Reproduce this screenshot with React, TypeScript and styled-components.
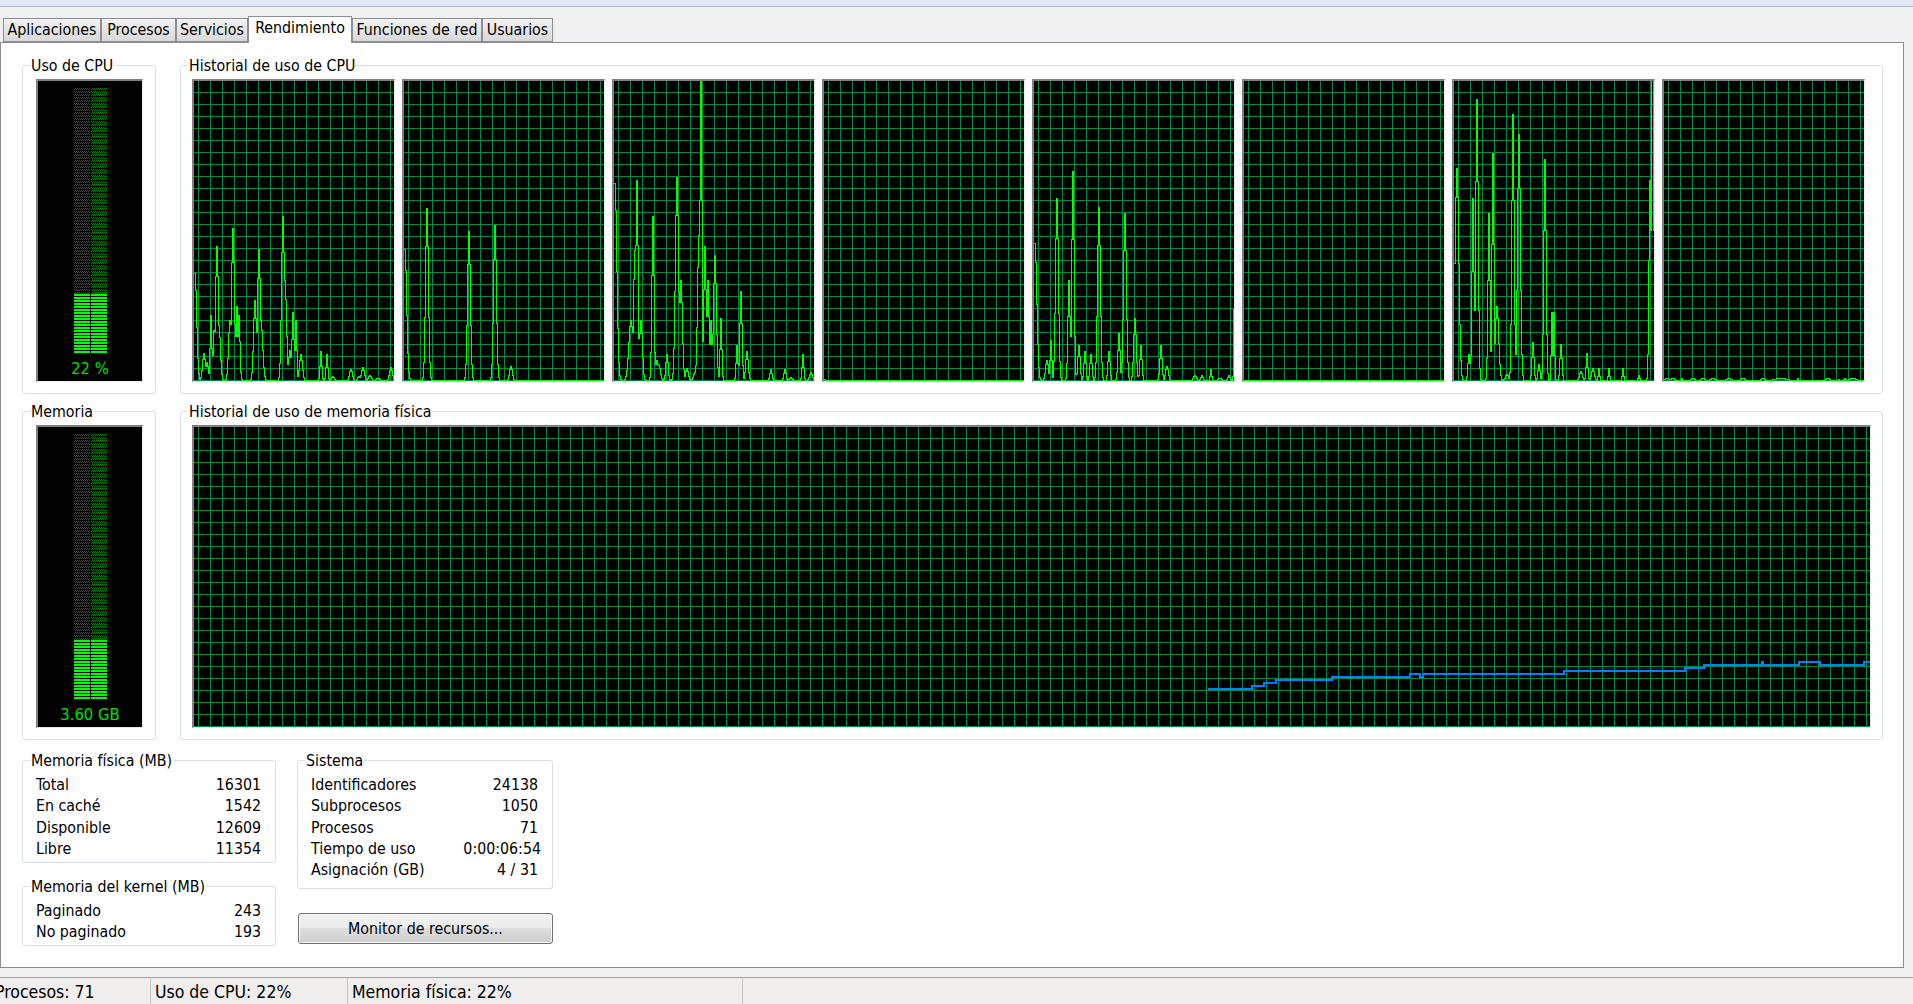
import React from "react";
import styled, { createGlobalStyle } from "styled-components";

const Global = createGlobalStyle`
  html, body { margin: 0; padding: 0; background: #f0f0f0; }
  body { width: 1913px; height: 1004px; overflow: hidden; }
  * { box-sizing: border-box; }
`;

const Window = styled.div`
  width: 1913px;
  height: 1004px;
  display: flex;
  flex-direction: column;
  overflow: hidden;
  background: #f0f0f0;
  color: #000;
  font-family: "DejaVu Sans Condensed", "DejaVu Sans", sans-serif;
  font-stretch: condensed;
  font-size: 15.8px;
`;
const TopStrip = styled.div`
  height: 7px;
  flex: none;
  background: #e4e8f5;
  border-bottom: 1px solid #b4b8cc;
`;
const TabBar = styled.div`
  display: flex;
  align-items: flex-end;
  height: 35px;
  flex: none;
  padding-left: 3px;
  position: relative;
  z-index: 1;
`;
const Tab = styled.div<{ $w: number; $active?: boolean }>`
  width: ${(p) => p.$w}px;
  height: ${(p) => (p.$active ? 27 : 24)}px;
  margin-bottom: ${(p) => (p.$active ? -1 : 0)}px;
  padding-top: 1px;
  text-align: center;
  line-height: 20px;
  border: 1px solid #8c8e94;
  border-bottom: ${(p) => (p.$active ? "none" : "1px solid #8c8e94")};
  background: ${(p) => (p.$active ? "#fff" : "linear-gradient(#f2f2f2, #d9d9d9)")};
  white-space: nowrap;
`;
const Panel = styled.div`
  height: 926px;
  width: 1904px;
  flex: none;
  background: #fff;
  border: 1px solid #898c95;
  padding: 22px 20px 0 21px;
  display: flex;
  flex-direction: column;
`;
const Row = styled.div<{ $mb: number }>`
  display: flex;
  gap: 24px;
  margin-bottom: ${(p) => p.$mb}px;
`;
const Group = styled.div<{ $w: number; $h: number; $mb?: number }>`
  position: relative;
  width: ${(p) => p.$w}px;
  height: ${(p) => p.$h}px;
  margin-bottom: ${(p) => p.$mb || 0}px;
  border: 1px solid #d9e0e8;
  border-radius: 3px;
`;
const MeterGroup = styled(Group)`
  padding: 13px 12px 0 13px;
`;
const HistoryGroup = styled(Group)`
  padding: 13px 0 0 11px;
  display: flex;
  gap: 7px;
`;
const Legend = styled.div`
  position: absolute;
  left: 7px;
  top: -10px;
  padding: 0 1px;
  line-height: 20px;
  background: #fff;
  white-space: nowrap;
`;
const Meter = styled.div`
  position: relative;
  width: 107px;
  height: 303px;
  background: #000;
  border-top: 2px solid #808080;
  border-left: 2px solid #808080;
  border-right: 1px solid #e8ecf0;
  border-bottom: 1px solid #e8ecf0;
  display: flex;
  flex-direction: column;
  align-items: center;
  padding-top: 7px;
`;
const Bars = styled.div`
  display: flex;
  gap: 1px;
`;
const BarColumn = styled.div`
  width: 16px;
  height: 265px;
  display: flex;
  flex-direction: column;
`;
const BarDim = styled.div`
  flex: 1;
  background-image: repeating-conic-gradient(#008000 0 25%, #000 0 50%);
  background-size: 2px 2px;
  -webkit-mask-image: repeating-linear-gradient(to bottom, #000 0 2px, transparent 2px 3px);
  mask-image: repeating-linear-gradient(to bottom, #000 0 2px, transparent 2px 3px);
`;
const BarLit = styled.div`
  height: 59px;
  background: repeating-linear-gradient(to bottom, #00ff00 0 2px, #000 2px 3px);
`;
const MeterText = styled.div`
  margin-top: 6px;
  color: #00e000;
  font-size: 16.5px;
  line-height: 20px;
  text-align: center;
`;
const Tile = styled.div`
  width: 203px;
  height: 303px;
  flex: none;
  background: #000;
  border-top: 2px solid #808080;
  border-left: 2px solid #808080;
  border-right: 1px solid #e8ecf0;
  border-bottom: 1px solid #e8ecf0;
`;
const MemTile = styled(Tile)`
  width: 1679px;
`;
const ChartSvg = styled.svg`
  display: block;
  shape-rendering: crispEdges;
`;
const BottomArea = styled.div`
  display: flex;
  gap: 21px;
`;
const Column = styled.div`
  display: flex;
  flex-direction: column;
`;
const Stats = styled(Group)`
  padding: 13px 14px 0 13px;
`;
const StatRow = styled.div<{ $over?: number }>`
  display: flex;
  justify-content: space-between;
  height: 21.35px;
  line-height: 21px;
  & > span:last-child {
    margin-right: ${(p) => -(p.$over || 0)}px;
  }
`;
const ResourceButton = styled.div`
  width: 255px;
  height: 31px;
  margin: 24px 0 0 1px;
  border: 1px solid #707070;
  border-radius: 3px;
  text-align: center;
  line-height: 29px;
  background: linear-gradient(#f2f2f2 0%, #ebebeb 48%, #dddddd 50%, #cfcfcf 100%);
  box-shadow: inset 0 0 0 1px #f8f8f8;
`;
const StatusBar = styled.div`
  margin-top: 9px;
  flex: 1;
  display: flex;
  background: #f0eded;
  border-top: 1px solid #a0a0a0;
  line-height: 26px;
  font-size: 17.5px;
`;
const StatusCell = styled.div<{ $w: number; $offset: number }>`
  width: ${(p) => p.$w}px;
  flex: none;
  border-right: 1px solid #c8c8c8;
  padding-left: ${(p) => p.$offset}px;
  white-space: nowrap;
  overflow: hidden;
  padding-top: 1px;
`;
const ClippedText = styled.span`
  display: inline-block;
  margin-left: -5px;
`;

type Peak = [number, number, number?];

const cpuPeaks: Peak[][] = [
  [[2, 107, 2.4], [11, 27], [14, 18], [18, 65, 1.2], [21, 50, 1.2], [24, 134], [26, 55], [37, 60], [40, 152, 2], [44, 74, 1.4], [46, 65, 1.4], [62, 80, 2], [66, 131, 2], [68, 60, 2.4], [90, 164, 2], [92, 100, 2.2], [97, 30], [100, 68, 1.4], [103, 60, 1.2], [108, 26, 2], [128, 29, 1.2], [134, 26, 1.2], [140, 4], [158, 11], [166, 4], [170, 13], [177, 5, 2], [185, 2, 2], [198, 13]],
  [[2, 131, 2.4], [24, 172], [66, 149, 2], [92, 155, 2], [108, 14]],
  [[2, 197, 2.6], [18, 60, 3], [22, 130, 2], [24, 200, 1.6], [28, 60, 2], [40, 164, 1.5], [44, 20, 2], [46, 15], [54, 26, 1.6], [64, 203, 2.2], [68, 100, 2], [74, 12, 2], [82, 8, 2], [88, 300, 1.4], [86, 145, 2], [92, 134, 1.6], [95, 100, 1.5], [102, 125, 2], [98, 60, 1.4], [108, 62, 1.2], [124, 35, 1.2], [128, 89, 1.5], [134, 29, 1.8], [158, 11, 1.5], [172, 11, 1.6], [178, 3], [190, 26, 1.2], [198, 8]],
  [[1, 7, 0.8]],
  [[2, 137, 2.6], [14, 20, 2], [18, 40, 1.2], [24, 182, 2], [36, 100, 1.5], [40, 209, 1.6], [46, 35, 1.6], [52, 29, 1.4], [58, 26, 1.5], [66, 173, 2], [76, 29, 1.5], [86, 47, 1.5], [92, 167, 2], [102, 62, 1.8], [108, 35, 1.4], [128, 35, 1.5], [134, 14, 2], [162, 5, 2], [169, 5, 1.5], [178, 11, 1], [187, 2, 2], [196, 5, 1.4], [201, 71, 0.6]],
  [],
  [[4, 212, 2.6], [16, 26, 1.5], [20, 182, 1.4], [24, 281, 1.7], [36, 167, 1.4], [40, 227, 1.4], [44, 74, 2.4], [54, 6], [60, 266, 1.6], [66, 246, 2], [80, 38, 1.4], [86, 16, 1.4], [92, 221, 1.6], [99, 68, 1], [101, 68, 1], [108, 36, 1.4], [128, 9], [134, 27, 1.2], [140, 12], [146, 12, 1], [156, 12, 1], [170, 12, 1], [186, 5, 1], [197, 200, 1.4], [199, 300, 1.2], [200, 300, 1.2]],
  [[4, 2, 3], [10, 2, 2], [19, 1.5, 1], [30, 2, 2], [40, 2, 2], [50, 2, 3], [66, 2, 3], [80, 2, 2], [100, 2, 2], [118, 2, 8], [135, 1.5, 1], [165, 2, 2], [176, 1, 1], [182, 2, 1], [190, 2, 4]],
];

const GREEN = "#00ff00";
const GRID = "#008a44";

function gridPath(w: number, h: number, xStart: number, yStart: number) {
  let d = "";
  for (let x = xStart; x < w; x += 12) d += `M${x + 0.5} 0V${h}`;
  for (let y = yStart; y < h; y += 12) d += `M0 ${y + 0.5}H${w}`;
  return d;
}

function cpuValues(peaks: Peak[]) {
  const out: number[] = [];
  for (let i = 0; i <= 201; i++) {
    let v = 0;
    const x = i + 2;
    for (const [px, h, w] of peaks) {
      const d = (x - px) / (w ?? 2);
      v = Math.max(v, h * Math.exp(-d * d));
    }
    out.push(v < 0.6 ? 0 : v);
  }
  return out;
}

function stepPath(values: number[], base: number) {
  let d = `M0 ${base - Math.round(values[0]) + 0.5}`;
  values.forEach((v, i) => {
    const y = base - Math.round(v) + 0.5;
    d += `V${y}H${i + 1}`;
  });
  return d;
}

const CpuChart = ({ peaks }: { peaks: Peak[] }) => (
  <ChartSvg width={200} height={300}>
    <path d={gridPath(200, 300, 4, 11)} stroke={GRID} fill="none" />
    <path d={stepPath(cpuValues(peaks), 299)} stroke={GREEN} fill="none" />
  </ChartSvg>
);

const memSteps: [number, number][] = [
  [1208, 689], [1251.5, 686], [1264, 683], [1276, 680], [1332, 677], [1410, 674], [1420, 677], [1423, 674],
  [1564, 671], [1685, 668], [1704, 665], [1762, 662.3], [1763, 665], [1799, 662], [1820, 665], [1864, 662],
];

function memPath() {
  const ox = 194;
  const oy = 427;
  let d = "";
  memSteps.forEach(([x, y], i) => {
    d += i === 0 ? `M${x - ox} ${y - oy}` : `H${x - ox}V${y - oy}`;
  });
  return d + `H${1870 - ox}`;
}

const MemChart = () => (
  <ChartSvg width={1676} height={300}>
    <path d={gridPath(1676, 300, 4, 11)} stroke={GRID} fill="none" />
    <path d={memPath()} stroke="#0080ff" strokeWidth={2} fill="none" />
  </ChartSvg>
);

const MeterView = ({ label }: { label: string }) => (
  <Meter>
    <Bars>
      <BarColumn><BarDim /><BarLit /></BarColumn>
      <BarColumn><BarDim /><BarLit /></BarColumn>
    </Bars>
    <MeterText>{label}</MeterText>
  </Meter>
);

const tabs: [string, number, boolean?][] = [
  ["Aplicaciones", 98], ["Procesos", 75], ["Servicios", 72], ["Rendimiento", 104, true], ["Funciones de red", 130], ["Usuarios", 71],
];

const StatGroup = ({ title, w, h, mb, rows }: { title: string; w: number; h: number; mb?: number; rows: [string, string, number?][] }) => (
  <Stats $w={w} $h={h} $mb={mb}>
    <Legend>{title}</Legend>
    {rows.map(([a, b, o]) => (
      <StatRow key={a} $over={o}><span>{a}</span><span>{b}</span></StatRow>
    ))}
  </Stats>
);

export default function App() {
  return (
    <Window>
      <Global />
      <TopStrip />
      <TabBar>
        {tabs.map(([t, w, a]) => <Tab key={t} $w={w} $active={a}>{t}</Tab>)}
      </TabBar>
      <Panel>
        <Row $mb={17}>
          <MeterGroup $w={134} $h={329}>
            <Legend>Uso de CPU</Legend>
            <MeterView label="22 %" />
          </MeterGroup>
          <HistoryGroup $w={1703} $h={329}>
            <Legend>Historial de uso de CPU</Legend>
            {cpuPeaks.map((p, i) => <Tile key={i}><CpuChart peaks={p} /></Tile>)}
          </HistoryGroup>
        </Row>
        <Row $mb={20}>
          <MeterGroup $w={134} $h={329}>
            <Legend>Memoria</Legend>
            <MeterView label="3.60 GB" />
          </MeterGroup>
          <HistoryGroup $w={1703} $h={329}>
            <Legend>Historial de uso de memoria física</Legend>
            <MemTile><MemChart /></MemTile>
          </HistoryGroup>
        </Row>
        <BottomArea>
          <Column>
            <StatGroup title="Memoria física (MB)" w={254} h={103} mb={23} rows={[["Total", "16301"], ["En caché", "1542"], ["Disponible", "12609"], ["Libre", "11354"]]} />
            <StatGroup title="Memoria del kernel (MB)" w={254} h={60} rows={[["Paginado", "243"], ["No paginado", "193"]]} />
          </Column>
          <Column>
            <StatGroup title="Sistema" w={256} h={129} rows={[["Identificadores", "24138"], ["Subprocesos", "1050"], ["Procesos", "71"], ["Tiempo de uso", "0:00:06:54", 3], ["Asignación (GB)", "4 / 31"]]} />
            <ResourceButton>Monitor de recursos...</ResourceButton>
          </Column>
        </BottomArea>
      </Panel>
      <StatusBar>
        <StatusCell $w={151} $offset={0}><ClippedText>Procesos: 71</ClippedText></StatusCell>
        <StatusCell $w={197} $offset={4}>Uso de CPU: 22%</StatusCell>
        <StatusCell $w={395} $offset={4}>Memoria física: 22%</StatusCell>
      </StatusBar>
    </Window>
  );
}
